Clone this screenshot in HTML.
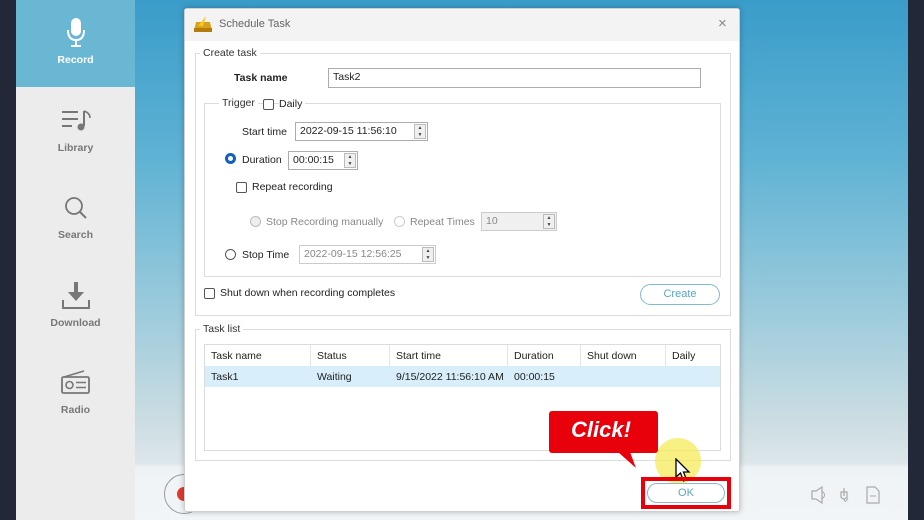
<!DOCTYPE html>
<html><head><meta charset="utf-8"><style>
*{margin:0;padding:0;box-sizing:border-box}
body{width:924px;height:520px;overflow:hidden;position:relative;font-family:"Liberation Sans",sans-serif;font-size:10.5px;color:#222;background:#232838}
.a{position:absolute}
.side{left:16px;top:0;width:119px;height:520px;background:#ececec}
.nav{position:absolute;left:0;width:119px;text-align:center;color:#777;font-weight:bold;font-size:10.5px}
.main{left:135px;top:0;width:773px;height:520px;background:linear-gradient(180deg,#3a9cc9 0%,#5eb2d4 30%,#9ccbdc 60%,#c9dce2 80%,#dde6ea 89%,#eef3f6 90%,#f2f5f7 100%)}
.dlg{left:184px;top:8px;width:556px;height:504px;background:#fff;border:1px solid #cfcfcf;border-radius:3px;box-shadow:0 0 6px rgba(0,0,0,.25)}
.grp{position:absolute;border:1px solid #dcdcdc}
.lg{position:absolute;background:#fff;padding:0 3px;top:-7px;color:#333}
.inp{position:absolute;border:1px solid #acacac;background:#fff;height:19px;padding:2px 4px;font-size:10.5px}
.spin{position:absolute;right:1px;top:1px;width:12px;height:15px;border:1px solid #bbb;background:#f0f0f0;font-size:5px;line-height:7px;text-align:center;color:#444}
.cb{position:absolute;width:11px;height:11px;border:1px solid #555;border-radius:2px;background:#fff}
.rd{position:absolute;width:11px;height:11px;border:1px solid #555;border-radius:50%;background:#fff}
.t{position:absolute;white-space:nowrap}
.th{position:absolute;top:0;height:21px;border-right:1px solid #e5e5e5;padding:5px 6px;color:#222}
</style></head><body>
<div class="a side">
 <div class="nav" style="top:0;height:87px;background:#6ab7d4;color:#fff">
  <svg width="20" height="32" viewBox="0 0 20 32" style="position:absolute;left:50px;top:17px"><rect x="5" y="1" width="10" height="18" rx="5" fill="#fff"/><path d="M2 13 Q2 23 10 23 Q18 23 18 13" stroke="#fff" stroke-width="2" fill="none"/><path d="M10 23V29M5 29H15" stroke="#fff" stroke-width="2"/></svg>
  <div style="position:absolute;top:54px;width:119px">Record</div></div>
 <svg class="a" style="left:44px;top:107px" width="32" height="28" viewBox="0 0 32 28"><path d="M2 5H18M2 12H18M2 19H12" stroke="#777" stroke-width="2"/><path d="M24 4V19" stroke="#777" stroke-width="2"/><path d="M24 4Q30 6 30 11" stroke="#777" stroke-width="1.6" fill="none"/><circle cx="21" cy="20" r="3.5" fill="#777"/></svg>
 <div class="nav" style="top:142px">Library</div>
 <svg class="a" style="left:47px;top:195px" width="28" height="28"><circle cx="11" cy="11" r="8" stroke="#777" stroke-width="1.8" fill="none"/><path d="M17 17L23 23" stroke="#777" stroke-width="2"/></svg>
 <div class="nav" style="top:229px">Search</div>
 <svg class="a" style="left:44px;top:280px" width="32" height="30"><path d="M16 2V14" stroke="#777" stroke-width="4"/><path d="M8 12H24L16 21Z" fill="#777"/><path d="M3 20V28H29V20" stroke="#777" stroke-width="2" fill="none"/></svg>
 <div class="nav" style="top:317px">Download</div>
 <svg class="a" style="left:44px;top:368px" width="32" height="28"><path d="M4 9L24 3" stroke="#777" stroke-width="1.5"/><rect x="2" y="9" width="27" height="16" rx="1.5" stroke="#777" stroke-width="1.8" fill="none"/><circle cx="9.5" cy="17" r="3.5" stroke="#777" stroke-width="1.6" fill="none"/><path d="M16 14.5H26M16 19.5H26" stroke="#777" stroke-width="1.6"/></svg>
 <div class="nav" style="top:404px">Radio</div>
</div>
<div class="a main"></div>
<div class="a" style="left:164px;top:474px;width:40px;height:40px;border-radius:50%;border:1px solid #999"></div>
<div class="a" style="left:177px;top:487px;width:14px;height:14px;border-radius:50%;background:#e23a2e"></div>
<svg class="a" style="left:808px;top:484px" width="75" height="22"><path d="M4 7H8L14 3V19L8 15H4Z" stroke="#aaa" fill="none" stroke-width="1.2"/><path d="M14 7Q19 11 14 15" stroke="#aaa" fill="none"/><path d="M36 4V12M33 8H39V13Q36 17 33 13Z" stroke="#aaa" fill="none" stroke-width="1.2"/><path d="M36 15Q37 20 40 14" stroke="#aaa" fill="none"/><path d="M59 3H67L71 7V19H59Z" stroke="#aaa" fill="none" stroke-width="1.2"/><path d="M62 12H68" stroke="#aaa"/></svg>

<div class="a dlg">
 <div class="a" style="left:0;top:0;width:554px;height:32px;background:#f3f3f3"></div>
 <svg class="a" style="left:7px;top:5px" width="22" height="20"><path d="M2 17L4 8L18 8L20 17Z" fill="#d8a21a"/><path d="M6 12L14 2L11 12Z" fill="#f4c82a"/><rect x="2" y="14" width="18" height="4" fill="#b37d0d"/></svg>
 <div class="t" style="left:34px;top:9px;color:#666;font-size:11px">Schedule Task</div>
 <div class="t" style="left:533px;top:6px;color:#888;font-size:15px">×</div>

 <div class="grp" style="left:10px;top:44px;width:536px;height:263px"><div class="lg" style="left:4px">Create task</div></div>
 <div class="t" style="left:49px;top:63px;font-weight:bold">Task name</div>
 <div class="inp" style="left:143px;top:59px;width:373px;height:20px">Task2</div>
 <div class="grp" style="left:19px;top:94px;width:517px;height:174px"><div class="lg" style="left:14px">Trigger</div></div>
 <div class="cb" style="left:78px;top:90px"></div><div class="t" style="left:94px;top:89px;background:#fff;padding-right:3px">Daily</div>
 <div class="t" style="left:57px;top:117px">Start time</div>
 <div class="inp" style="left:110px;top:113px;width:133px">2022-09-15 11:56:10<div class="spin">▲<br>▼</div></div>
 <div class="rd" style="left:40px;top:144px;border:3px solid #1060c0"></div>
 <div class="t" style="left:57px;top:145px">Duration</div>
 <div class="inp" style="left:103px;top:142px;width:70px">00:00:15<div class="spin">▲<br>▼</div></div>
 <div class="cb" style="left:51px;top:173px"></div><div class="t" style="left:67px;top:172px">Repeat recording</div>
 <div class="rd" style="left:65px;top:207px;border-color:#bbb;background:#eee"></div>
 <div class="t" style="left:81px;top:207px;color:#888">Stop Recording manually</div>
 <div class="rd" style="left:209px;top:207px;border-color:#ccc"></div>
 <div class="t" style="left:225px;top:207px;color:#888">Repeat Times</div>
 <div class="inp" style="left:296px;top:203px;width:76px;background:#f0f0f0;border-color:#ccc;color:#888">10<div class="spin">▲<br>▼</div></div>
 <div class="rd" style="left:40px;top:240px"></div><div class="t" style="left:57px;top:240px">Stop Time</div>
 <div class="inp" style="left:114px;top:236px;width:137px;border-color:#ccc;color:#888">2022-09-15 12:56:25<div class="spin">▲<br>▼</div></div>
 <div class="cb" style="left:19px;top:279px"></div><div class="t" style="left:35px;top:278px">Shut down when recording completes</div>
 <div class="a" style="left:455px;top:275px;width:80px;height:21px;border:1px solid #7fbcd2;border-radius:11px;text-align:center;line-height:19px;color:#5aa6c4;font-size:11px">Create</div>

 <div class="grp" style="left:10px;top:320px;width:536px;height:132px"><div class="lg" style="left:4px">Task list</div></div>
 <div class="a" style="left:19px;top:335px;width:517px;height:107px;border:1px solid #dcdcdc;background:#fff">
  <div class="th" style="left:0;width:106px">Task name</div>
  <div class="th" style="left:106px;width:79px">Status</div>
  <div class="th" style="left:185px;width:118px">Start time</div>
  <div class="th" style="left:303px;width:73px">Duration</div>
  <div class="th" style="left:376px;width:85px">Shut down</div>
  <div class="th" style="left:461px;width:54px;border:none">Daily</div>
  <div class="a" style="left:0;top:21px;width:515px;height:21px;background:#d8eefa"></div>
  <div class="t" style="left:6px;top:26px">Task1</div>
  <div class="t" style="left:112px;top:26px">Waiting</div>
  <div class="t" style="left:191px;top:26px">9/15/2022 11:56:10 AM</div>
  <div class="t" style="left:309px;top:26px">00:00:15</div>
 </div>
</div>

<div class="a" style="left:655px;top:438px;width:46px;height:46px;border-radius:50%;background:rgba(245,235,90,.75)"></div>
<svg class="a" style="left:674px;top:458px" width="18" height="26"><path d="M2 1V19L6.5 15L9.5 23L12.5 21.5L9.5 14H15Z" fill="#fff" stroke="#000" stroke-width="1.3"/></svg>
<div class="a" style="left:641px;top:477px;width:90px;height:32px;border:4px solid #e8000b"></div>
<div class="a" style="left:647px;top:483px;width:78px;height:20px;border:1px solid #7fbcd2;border-radius:10px;text-align:center;line-height:18px;color:#5aa6c4;font-size:11px;background:#fff">OK</div>
<svg class="a" style="left:548px;top:410px" width="112" height="62"><path d="M70 42L88 58L82 42Z" fill="#e8000b"/><rect x="1" y="1" width="109" height="42" rx="3" fill="#e8000b"/></svg>
<div class="t" style="left:571px;top:417px;color:#fff;font-size:22px;font-weight:bold;font-style:italic;font-family:'Liberation Sans',sans-serif">Click!</div>
</body></html>
